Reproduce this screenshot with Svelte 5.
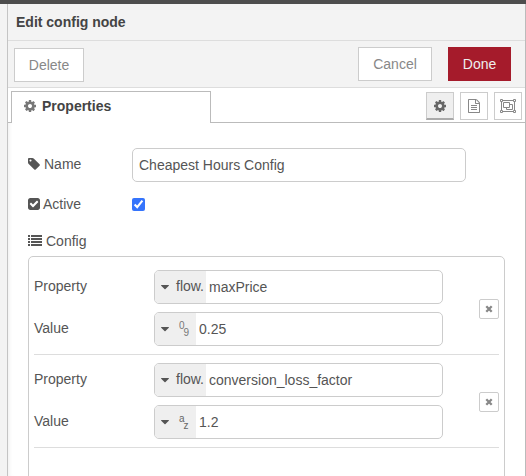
<script>
  let name = $state('Cheapest Hours Config');
  let active = $state(true);
  let items = $state([
    { property: 'maxPrice', type: 'num', value: '0.25' },
    { property: 'conversion_loss_factor', type: 'str', value: '1.2' }
  ]);
  const glyphs = { num: ['0', '9'], str: ['a', 'z'] };
</script>

{#snippet cog()}
  <svg class="icon" width="14" height="14" viewBox="0 0 1792 1792"><path d="M1152 896q0-106-75-181t-181-75-181 75-75 181 75 181 181 75 181-75 75-181zm512-109v222q0 12-8 23t-20 13l-185 28q-19 54-39 91 35 50 107 138 10 12 10 25t-9 23q-27 37-99 108t-94 71q-12 0-26-9l-138-108q-44 23-91 38-16 136-29 186-7 28-36 28h-222q-14 0-24.5-8.5t-11.5-21.5l-28-184q-49-16-90-37l-141 107q-10 9-25 9-14 0-25-11-126-114-165-168-7-10-7-23 0-12 8-23 15-21 51-66.5t54-70.5q-27-50-41-99l-183-27q-13-2-21-12.5t-8-23.5v-222q0-12 8-23t19-13l186-28q14-46 39-92-40-57-107-138-10-12-10-24 0-10 9-23 26-36 98.5-107.5t94.5-71.5q13 0 26 10l138 107q44-23 91-38 16-136 29-186 7-28 36-28h222q14 0 24.5 8.5t11.5 21.5l28 184q49 16 90 37l142-107q9-9 24-9 13 0 25 10 129 119 165 170 7 8 7 22 0 12-8 23-15 21-51 66.5t-54 70.5q26 50 41 98l183 28q13 2 21 12.5t8 23.5z" /></svg>
{/snippet}

{#snippet caret()}
  <svg class="caret" width="8" height="5" viewBox="0 0 8 5"><path d="M0.5 0h7q.8 0 .3.7L4.5 4q-.5.5-1 0L.2.7Q-.3 0 .5 0z" /></svg>
{/snippet}

<div class="screen">
  <div class="topbar"></div>
  <div class="body">
    <div class="gutter"></div>
    <main class="tray">
      <header class="title">Edit config node</header>
      <div class="toolbar">
        <button class="btn delete">Delete</button>
        <span class="spacer"></span>
        <button class="btn cancel">Cancel</button>
        <button class="btn primary">Done</button>
      </div>
      <nav class="tabs">
        <div class="tab">{@render cog()}<span>Properties</span></div>
        <div class="tab-buttons">
          <button class="square selected" aria-label="Properties">{@render cog()}</button>
          <button class="square" aria-label="Description">
            <svg class="icon" width="14" height="14" viewBox="0 0 1792 1792"><path d="M1596 380q28 28 48 76t20 88v1152q0 40-28 68t-68 28h-1344q-40 0-68-28t-28-68v-1600q0-40 28-68t68-28h896q40 0 88 20t76 48zm-444-244v376h376q-10-29-22-41l-313-313q-12-12-41-22zm384 1528v-1024h-416q-40 0-68-28t-28-68v-416h-768v1536h1280zm-1024-864q0-14 9-23t23-9h704q14 0 23 9t9 23v64q0 14-9 23t-23 9h-704q-14 0-23-9t-9-23v-64zm736 224q14 0 23 9t9 23v64q0 14-9 23t-23 9h-704q-14 0-23-9t-9-23v-64q0-14 9-23t23-9h704zm0 256q14 0 23 9t9 23v64q0 14-9 23t-23 9h-704q-14 0-23-9t-9-23v-64q0-14 9-23t23-9h704z" /></svg>
          </button>
          <button class="square" aria-label="Appearance">
            <svg class="icon outline" width="16" height="14" viewBox="0 0 16 14">
              <path d="M3 1.5h10M3 12.5h10M1.5 3v8M14.5 3v8" />
              <path d="M.5.5h2v2h-2zM13.5.5h2v2h-2zM.5 11.5h2v2h-2zM13.5 11.5h2v2h-2z" />
              <path d="M3.5 3.5h6v5h-6zM9.5 5.5h3v5h-6v-2" />
            </svg>
          </button>
        </div>
      </nav>

      <form class="form">
        <div class="row name">
          <label for="name">
            <svg class="icon tag" width="14" height="14" viewBox="0 0 1792 1792"><path d="M576 448q0-53-37.5-90.5t-90.5-37.5-90.5 37.5-37.5 90.5 37.5 90.5 90.5 37.5 90.5-37.5 37.5-90.5zm1067 576q0 53-37 90l-491 492q-39 37-91 37-53 0-90-37l-715-716q-38-37-64.5-101t-26.5-117v-416q0-52 38-90t90-38h416q53 0 117 26.5t102 64.5l715 714q37 39 37 91z" /></svg>
            <span>Name</span>
          </label>
          <input id="name" class="text" type="text" bind:value={name} />
        </div>
        <div class="row active">
          <label for="active">
            <svg class="icon check" width="14" height="14" viewBox="0 0 1792 1792"><path d="M813 1299l614-614q19-19 19-45t-19-45l-102-102q-19-19-45-19t-45 19l-467 467-211-211q-19-19-45-19t-45 19l-102 102q-19 19-19 45t19 45l358 358q19 19 45 19t45-19zm851-883v960q0 119-84.5 203.5t-203.5 84.5h-960q-119 0-203.5-84.5t-84.5-203.5v-960q0-119 84.5-203.5t203.5-84.5h960q119 0 203.5 84.5t84.5 203.5z" /></svg>
            <span>Active</span>
          </label>
          <input id="active" class="checkbox" type="checkbox" bind:checked={active} />
        </div>
        <div class="row config">
          <svg class="icon" width="14" height="11" viewBox="0 0 14 11"><path d="M0 0h2v2H0zM3 0h11v2H3zM0 3h2v2H0zM3 3h11v2H3zM0 6h2v2H0zM3 6h11v2H3zM0 9h2v2H0zM3 9h11v2H3z" /></svg>
          <span>Config</span>
        </div>

        <div class="list">
          {#each items as item}
            <div class="item">
              <div class="fields">
                <div class="field">
                  <span class="label">Property</span>
                  <div class="typed">
                    <span class="type flow">{@render caret()}<span class="prefix">flow.</span></span>
                    <input aria-label="Property" type="text" bind:value={item.property} />
                  </div>
                </div>
                <div class="field">
                  <span class="label">Value</span>
                  <div class="typed">
                    <span class="type">{@render caret()}<span class="glyph {item.type}"><i>{glyphs[item.type][0]}</i><i class="low">{glyphs[item.type][1]}</i></span></span>
                    <input aria-label="Value" type="text" bind:value={item.value} />
                  </div>
                </div>
              </div>
              <button class="remove" aria-label="Remove">
                <svg width="8" height="8" viewBox="0 0 8 8"><path d="M1.3 1.3l5.4 5.4M6.7 1.3L1.3 6.7" /></svg>
              </button>
            </div>
          {/each}
        </div>
      </form>
    </main>
  </div>
</div>

<style>
  :global(body) { margin: 0; overflow: hidden; }
  .screen, .screen * { box-sizing: border-box; }
  .screen {
    width: 526px; height: 476px; overflow: hidden;
    display: flex; flex-direction: column;
    font: 14px/20px "Liberation Sans", Arial, sans-serif;
    color: #555; background: #fff;
  }
  button, input { font: inherit; color: inherit; margin: 0; }
  .icon { display: block; flex: none; fill: currentColor; }
  .topbar { height: 4px; flex: none; background: #4d4d4d; }
  .body { display: flex; flex: 1; min-height: 0; }
  .gutter { width: 7px; flex: none; background: #f3f3f3; }
  .tray {
    flex: 1; min-width: 0; display: flex; flex-direction: column;
    border-left: 1px solid #c4c4c4; border-right: 1px solid #bbb;
    overflow: hidden;
  }
  .title {
    height: 37px; flex: none; padding: 8px 0 0 8px;
    font-weight: bold; color: #444;
    background: #f3f3f3; border-bottom: 1px solid #ddd;
  }
  .toolbar {
    height: 47px; flex: none; display: flex; align-items: flex-start;
    padding: 6px 14px 0 6px;
    background: #f3f3f3; border-bottom: 1px solid #ddd;
  }
  .spacer { flex: 1; }
  .btn {
    height: 34px; padding: 0; border: 1px solid #ccc; border-radius: 0;
    background: #fff; color: #888;
  }
  .delete { width: 70px; margin-top: 1px; }
  .cancel { width: 74px; margin-right: 16px; }
  .primary { width: 63px; background: #a51b2b; border-color: #a51b2b; color: #eee; }
  .tabs {
    height: 35px; flex: none; display: flex; justify-content: space-between;
    padding: 3px 3px 0; border-bottom: 1px solid #bbb;
  }
  .tab {
    width: 200px; height: 32px; display: flex; gap: 5px;
    padding: 4px 0 0 11px; border: 1px solid #bbb; border-bottom: 0;
    background: #fff; font-weight: bold; color: #444;
  }
  .tab .icon { margin-top: 3px; color: #777; }
  .tab-buttons { display: flex; gap: 6px; padding-top: 1px; }
  .square {
    width: 28px; height: 28px; padding: 0;
    display: flex; align-items: center; justify-content: center;
    border: 1px solid #ccc; border-radius: 0; background: #fff; color: #888;
  }
  .selected { background: #efefef; border-bottom: 2px solid #aaa; color: #666; }
  .selected .icon { margin-top: 1px; }
  .outline { fill: none; stroke: currentColor; stroke-width: 1; }
  .form {
    flex: 1; min-height: 0; margin: 0; padding: 25px 20px 0;
    display: flex; flex-direction: column; box-shadow: inset 4px 0 4px -3px #eee;
  }
  .row { display: flex; flex: none; }
  .row label { width: 104px; flex: none; display: flex; }
  .name { height: 34px; }
  .name label { padding-top: 6px; gap: 3px; }
  .tag { margin: 3px 0 0 -1px; }
  .text {
    width: 334px; height: 34px; padding: 0 6px;
    border: 1px solid #ccc; border-radius: 5px; background: #fff; outline: none;
  }
  .active { height: 20px; margin-top: 12px; }
  .active label { gap: 2px; }
  .check { margin: 3px 0 0 -1px; }
  .checkbox { width: 13px; height: 13px; margin-top: 4px; accent-color: #3574fc; }
  .config { height: 20px; margin-top: 17px; gap: 4px; }
  .config .icon { margin-top: 4px; }
  .list {
    width: 477px; height: 240px; flex: none; margin-top: 5px; padding: 5px;
    border: 1px solid #ccc; border-radius: 5px;
  }
  .item {
    height: 93px; display: flex; align-items: flex-start; justify-content: space-between;
    padding-top: 8px; border-bottom: 1px solid #ddd;
  }
  .fields { display: flex; flex-direction: column; gap: 8px; }
  .field { display: flex; }
  .label { width: 120px; padding-top: 6px; }
  .typed {
    width: 289px; height: 34px; display: flex; overflow: hidden;
    border: 1px solid #ccc; border-radius: 5px; background: #fff;
  }
  .type { width: 41px; flex: none; display: flex; padding-left: 6px; background: #efefef; }
  .flow { width: 51px; }
  .caret { display: block; margin-top: 14px; fill: #555; }
  .prefix { margin: 5px 0 0 7px; }
  .typed input { flex: 1; min-width: 0; padding: 0 3px; border: 0; background: none; outline: none; }
  .glyph { display: flex; margin: 7px 0 0 10px; font-size: 10px; line-height: 12px; }
  .glyph i { font-style: normal; }
  .low { padding-top: 7px; margin-left: -1px; }
  .num { color: #777; }
  .str { color: #666; }
  .remove {
    width: 20px; height: 20px; margin-top: 29px; padding: 0;
    display: flex; align-items: center; justify-content: center;
    border: 1px solid #ccc; border-radius: 2px; background: #fff;
  }
  .remove svg { display: block; fill: none; stroke: #888; stroke-width: 2.3; }
</style>
